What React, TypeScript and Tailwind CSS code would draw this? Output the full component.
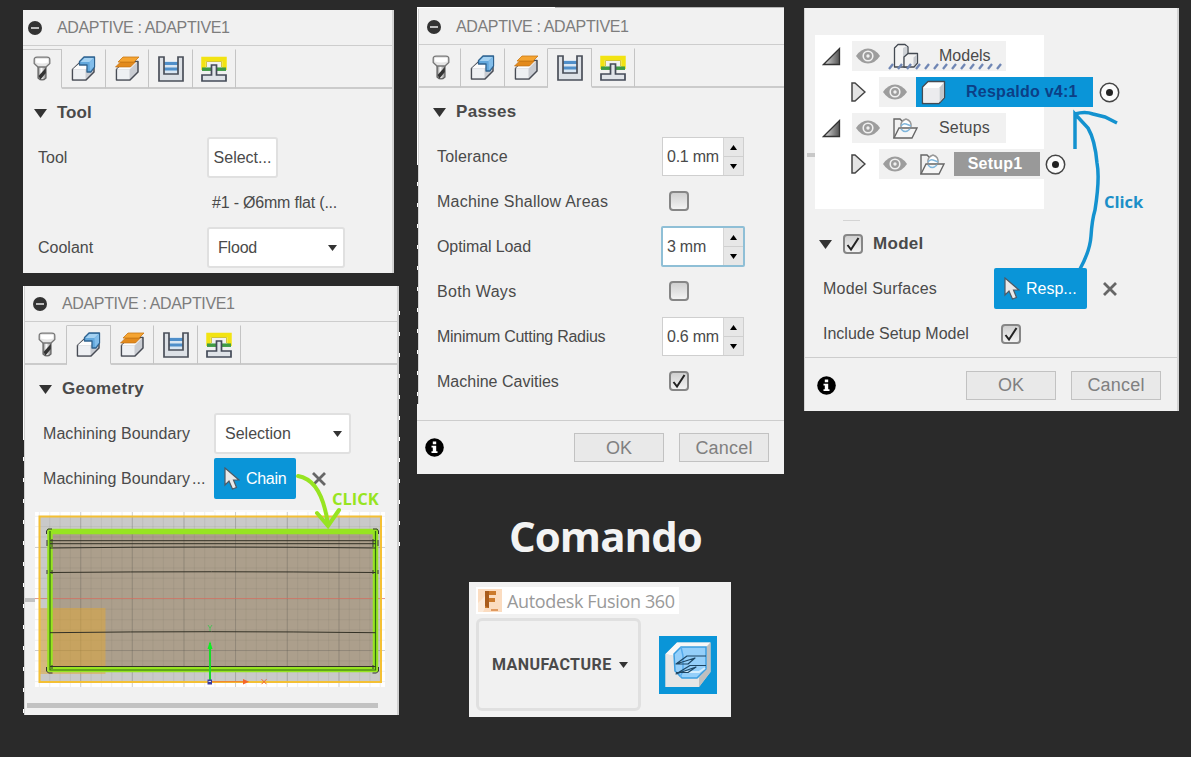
import type { ReactNode } from "react";

const LABEL = "whitespace-pre text-[16px] leading-5 text-[#4a4a4a]";

function ToolIcon() {
  return (
    <svg width="18" height="26" viewBox="0 0 18 26">
      <defs>
        <linearGradient id="bit" x1="0" x2="1">
          <stop offset="0" stopColor="#777" />
          <stop offset="0.4" stopColor="#fff" />
          <stop offset="1" stopColor="#888" />
        </linearGradient>
      </defs>
      <path d="M5 10h8v12q-4 4-8 0z" fill="url(#bit)" stroke="#666" strokeWidth="1.2" />
      <path d="M5.5 20 12.8 12v5L7.5 23.5z" fill="#333" />
      <path d="M1.2 4Q1 1.2 4 1.2h10q3 0 2.800 2.800v3.500L13 11H5L1.200 7.500z" fill="#e6e6e6" stroke="#777" strokeWidth="1.300" />
      <path d="M3 6.500Q9 8.500 15 6.500V3H3z" fill="#fff" />
    </svg>
  );
}

function BlockBase() {
  return (
    <g stroke="#484c55" strokeWidth="1.500" strokeLinejoin="round">
      <path d="M1.500 13.500 10 5.500h13V16l-8 8H1.500z" fill="#c9ccd2" />
      <path d="M1.500 13.500 10 6h12l-7.500 7.500z" fill="#fdfdfd" stroke="none" />
      <path d="M2.300 14h12.200v9.200H2.300z" fill="#eef0f3" stroke="none" />
    </g>
  );
}

function GeometryIcon() {
  return (
    <svg width="25" height="26" viewBox="0 0 25 26">
      <BlockBase />
      <path d="M13 1h10.500v10L20 16h-4V9H8.500V5.500z" fill="#62a8dd" stroke="#2f628e" strokeWidth="1.300" strokeLinejoin="round" />
      <path d="M13.500 2h9l-4 4H9.500z" fill="#a5d2f2" />
      <path d="m18.500 6 4.500-4v8.500L19 15z" fill="#82bdea" />
    </svg>
  );
}

function HeightsIcon() {
  return (
    <svg width="25" height="26" viewBox="0 0 25 26">
      <BlockBase />
      <path d="M5.500 6h15l-5 5h-15z" fill="#e38a1c" stroke="#b96a12" strokeWidth=".6" />
      <path d="M8 1h16l-5 5H3z" fill="#f5a431" stroke="#c97815" strokeWidth=".8" />
    </svg>
  );
}

function PassesIcon() {
  return (
    <svg width="26" height="26" viewBox="0 0 26 26">
      <path d="M5 5h16v13H5z" fill="#d9e6f2" />
      <path d="M6 7.500h14M6 13h14" stroke="#4f8fca" strokeWidth="3" />
      <path d="M1 1h5v17h14V1h5v24H1z" fill="#dde1e6" stroke="#4a4f59" strokeWidth="1.700" />
    </svg>
  );
}

function LinkingIcon() {
  return (
    <svg width="26" height="26" viewBox="0 0 26 26">
      <path d="M2.500 14V3h21v11" fill="none" stroke="#f2e312" strokeWidth="4.500" />
      <path d="M5.500 11V5.500h15V11" fill="none" stroke="#c9b918" strokeWidth=".8" />
      <path d="M1 13.200h24" stroke="#3f9b45" strokeWidth="3.500" />
      <path d="M10.500 9h5v10H25v6H1v-6h9.500z" fill="#dfe3e8" stroke="#444b58" strokeWidth="1.700" />
    </svg>
  );
}

function CheckBox({ checked = false }: { checked?: boolean }) {
  return (
    <span className="flex size-5 shrink-0 items-center justify-center rounded-[4px] border-2 border-[#868686] bg-linear-to-b from-[#d0d0d0] to-[#f3f3f3]">
      {checked && (
        <svg width="16" height="16" viewBox="0 0 16 16" fill="none" stroke="#222" strokeWidth="2">
          <path d="m2.500 9 3.500 4.500L13.500 2" />
        </svg>
      )}
    </span>
  );
}

function Caret({ className }: { className: string }) {
  return (
    <svg className={className} viewBox="0 0 12 8" preserveAspectRatio="none" fill="#333">
      <path d="M0 0h12L6 8z" />
    </svg>
  );
}

function Spinner({ value, focus = false }: { value: string; focus?: boolean }) {
  return (
    <div
      className={
        focus
          ? "flex h-[41px] w-[84px] rounded-[2px] border-2 border-[#8fbfd6] bg-white"
          : "mx-px flex h-[39px] w-[82px] border border-[#cfcfcf] bg-white"
      }
    >
      <span className={`${LABEL} flex flex-1 items-center pl-1 tracking-[-0.250px]`}>{value}</span>
      <div className="flex w-5 flex-col border-l border-[#d5d5d5] bg-[#e7e7e7]">
        <span className="flex flex-1 items-center justify-center border-b border-[#d0d0d0]">
          <svg width="7" height="5" viewBox="0 0 7 5"><path d="M3.500 0 7 5H0z" /></svg>
        </span>
        <span className="flex flex-1 items-center justify-center">
          <svg width="7" height="5" viewBox="0 0 7 5"><path d="M3.500 5 7 0H0z" /></svg>
        </span>
      </div>
    </div>
  );
}

function Footer() {
  const button = "flex h-[29px] w-[90px] items-center justify-center border-[1.500px] border-[#c2c2c2] bg-[#e9e9e9] pt-px text-[18px] text-[#808080]";
  return (
    <div className="flex flex-1 items-center">
      <svg width="19" height="19" viewBox="0 0 19 19">
        <circle cx="9.500" cy="9.500" r="9.300" />
        <path d="M7.800 3.500h3.400v2.800H7.800zM6.500 7.800h4.700v5.400h1.300V15h-6v-1.800h1.300V9.500H6.500z" fill="#fff" />
      </svg>
      <span className={`${button} ml-auto`}>OK</span>
      <span className={`${button} ml-[15px] tracking-[0.200px]`}>Cancel</span>
    </div>
  );
}

function DialogHead({ active, wide = false }: { active: number; wide?: boolean }) {
  const icons: ReactNode[] = [<ToolIcon />, <GeometryIcon />, <HeightsIcon />, <PassesIcon />, <LinkingIcon />];
  const widths = [wide ? "w-[42px] pl-[2px]" : "w-[39px]", "w-[44px]", "w-[43px]", "w-[44px]", "w-[43px]"];
  return (
    <>
      <div className={`flex h-[36px] items-center border-b border-[#cdcdcd] ${wide ? "pl-[8px]" : "pl-[5px]"}`}>
        <span className="flex size-[14px] items-center justify-center rounded-full bg-[#333]">
          <span className="h-[2px] w-[8px] bg-[#bdbdbd]" />
        </span>
        <span className="ml-[15px] whitespace-pre text-[16px] tracking-[-0.350px] text-[#7d7d7d]">ADAPTIVE : ADAPTIVE1</span>
      </div>
      <div className="flex h-[43px] pt-[3px]">
        {icons.map((icon, i) => (
          <div
            key={i}
            className={`${widths[i]} flex items-center justify-center border-r border-r-[#c4c4c4] border-t border-b-2 ${
              i === active ? "border-t-[#c8c8c8] border-b-transparent" : "border-t-transparent border-b-[#cbcbcb]"
            }`}
          >
            {icon}
          </div>
        ))}
        <div className="flex-1 border-b-2 border-[#cbcbcb]" />
      </div>
    </>
  );
}

function Section({ title, className }: { title: string; className: string }) {
  return (
    <div className={`flex h-[46px] items-center pt-[2px] ${className}`}>
      <Caret className="h-[9px] w-[13px]" />
      <span className="ml-[10px] text-[17px] font-bold text-[#4a4a4a]">{title}</span>
    </div>
  );
}

function Cursor() {
  return (
    <svg width="16" height="23" viewBox="0 0 16 23" className="shrink-0">
      <path d="M1 1v17l4-4 3.500 8 4-1.500L9.500 13h5.500z" fill="#e9e9e9" stroke="#4d5a66" strokeWidth="1.200" />
    </svg>
  );
}

function Cross() {
  return (
    <svg width="14" height="14" viewBox="0 0 14 14" stroke="#666" strokeWidth="2.800">
      <path d="m1 1 12 12M13 1 1 13" />
    </svg>
  );
}

function Stock() {
  const minor = Array.from({ length: 34 }, (_, i) => 4.400 + i * 10.330);
  const rows = Array.from({ length: 17 }, (_, i) => 4.300 + i * 10.330);
  const major = [45.700, 97.300, 149, 200.500, 252.300, 304];
  return (
    <svg width="350" height="175" viewBox="0 0 350 175" className="block">
      <rect width="350" height="175" fill="#fff" />
      <rect x="4.500" y="4.500" width="341.500" height="165.500" fill="#c9c9c9" />
      <rect x="15" y="19" width="325" height="139" fill="#ac9f8c" />
      <g stroke="#5c5c50" strokeOpacity=".09">
        {minor.map((x) => <path key={x} d={`M${x} 0V175`} />)}
        {rows.map((y) => <path key={y} d={`M0 ${y}H350`} />)}
      </g>
      <g stroke="#444" strokeOpacity=".2">
        {major.map((x) => <path key={x} d={`M${x} 0V175`} />)}
        <path d="M0 35.500H350M0 138.500H350" />
      </g>
      <path d="M0 86.500H350" stroke="#dc6a5c" strokeOpacity=".65" />
      <rect x="5" y="96" width="65.500" height="66" fill="#e2a834" fillOpacity=".5" />
      <rect x="4.500" y="4.500" width="341.500" height="165.500" fill="none" stroke="#f4c034" strokeWidth="2" />
      <path d="M15 19.500v138h325.500v-138z" fill="none" stroke="#97e421" strokeWidth="5.500" />
      <path d="M15 19v139h325.500V19" fill="none" stroke="#2f6b12" strokeWidth="1.200" />
      <path d="M15 28.700h325.500M15 31.700h325.500M15 36q160-2 325.500 0M15 60.500q160-1.500 325.500 0M15 120.700q160-2 325.500 0M15 154.500h325.500" fill="none" stroke="#333126" strokeWidth="1" />
      <g fill="none" stroke="#333" strokeWidth="1">
        <path d="M17 17h-4l-1.500 2v3M338 17h4l1.500 2v3M12 28v6M343 28v6M12 58v4M343 58v4M11.500 155v4l2 2h4M343.500 155v4l-2 2h-4" />
        <path d="M17 27v8M338 27v8M17 58v4M338 58v4M17 153v4M338 153v4" />
      </g>
      <path d="M175 169V131" stroke="#18dc28" strokeWidth="2" />
      <path d="m175 129-2.500 8h5z" fill="#10ee22" />
      <path d="m173 113 2 3 2-3m-2 3v3" fill="none" stroke="#4fc05a" />
      <path d="M175 169.700h35" stroke="#f08a2c" strokeWidth="1.200" />
      <path d="m208 167 6 2.700-6 2.700z" fill="#f5652a" />
      <path d="m226.500 167.200 5 5m0-5-5 5" stroke="#f0652e" />
      <path d="M172.500 167.500h4.500v5h-4.500z" fill="#3a3a9c" />
      <path d="M173.500 169.500h2.500" stroke="#ddd" />
    </svg>
  );
}

function Eye() {
  return (
    <svg width="24" height="16" viewBox="0 0 24 16" className="shrink-0">
      <path d="M0 8Q5 .5 12 .5T24 8q-5 7.500-12 7.500T0 8z" fill="#9d9d9d" />
      <circle cx="12" cy="8" r="4.800" fill="none" stroke="#f1f1f1" strokeWidth="1.600" />
      <circle cx="12" cy="8" r="1.700" fill="#f1f1f1" />
    </svg>
  );
}

function OpenArrow() {
  return (
    <svg width="19" height="19" viewBox="0 0 19 19" className="shrink-0">
      <defs>
        <linearGradient id="tri">
          <stop offset=".2" stopColor="#c5c5c5" />
          <stop offset="1" stopColor="#555" />
        </linearGradient>
      </defs>
      <path d="M17.500 1.500v16H1.500z" fill="url(#tri)" stroke="#333" strokeWidth="1.300" />
    </svg>
  );
}

function ClosedArrow() {
  return (
    <svg width="15" height="20" viewBox="0 0 15 20" className="shrink-0">
      <path d="M1 1h3l10 9-10 9H1z" fill="#e4e4e4" stroke="#444" strokeWidth="1.500" />
    </svg>
  );
}

function Folder() {
  return (
    <svg width="25" height="21" viewBox="0 0 25 21" fill="none" stroke="#666" strokeWidth="1.400" className="shrink-0">
      <path d="M8 9q-1-6 5-8 6 2 5 8" stroke="#999" fill="#fff" />
      <path d="M8 8q2-3 5-2t5 2" stroke="#7fb6dc" />
      <path d="M1 20V1h6l2 2" />
      <path d="M1 20 6 10h18l-5 10z" fill="#f6f6f6" />
      <path d="M8 11q4 5 9 0" stroke="#7fb6dc" />
    </svg>
  );
}

function Radio() {
  return (
    <svg width="21" height="21" viewBox="0 0 21 21" className="shrink-0">
      <circle cx="10.500" cy="10.500" r="9.200" fill="#fbfbfb" stroke="#444" strokeWidth="1.500" />
      <circle cx="10.500" cy="10.500" r="3.500" fill="#222" />
    </svg>
  );
}

function ModelsIcon() {
  return (
    <svg width="26" height="26" viewBox="0 0 26 26" stroke="#444a52" strokeWidth="1.300" strokeLinejoin="round">
      <path d="M1.500 5 5 1.500h7L15 4v20H1.500z" fill="#f4f4f4" />
      <path d="M10 5 14 3v20h-4z" fill="#cfd2d6" stroke="none" />
      <path d="m11 14 4-3.500h9.500V20L21 24H11z" fill="#f2f2f2" />
      <path d="M20.500 14.500 24 11.500v8L20.500 23z" fill="#c5c8cd" stroke="none" />
    </svg>
  );
}

function CubeIcon() {
  return (
    <svg width="25" height="25" viewBox="0 0 25 25" strokeLinejoin="round">
      <path d="M1.500 7 7 1.500h16.500v16L18 23.500H1.500z" fill="#fdfdfd" stroke="#444a52" strokeWidth="1.400" />
      <path d="m18.500 7.500 4.500-5v15l-4.500 5z" fill="#c4c8cc" />
      <path d="M2.500 8h15.500v14.500H2.500z" fill="#ececee" />
    </svg>
  );
}

function AdaptiveIcon() {
  return (
    <svg width="58" height="58" viewBox="0 0 58 58">
      <rect width="58" height="58" fill="#0a95d8" />
      <path d="M6.500 18 18 6.500h33.500V36L40 51H6.500z" fill="#d4d4d4" />
      <path d="M6.500 18 18 6.500h33.500L47 11H22l-7 9z" fill="#f8f8f8" />
      <path d="M6.500 18 15 20v15l8 7h17v9H6.500z" fill="#e6e6e6" />
      <path d="m51.500 6.500-4 4.500v22L40 42v9l11.500-15z" fill="#bfbfbf" />
      <path d="m15 18 7-7h25v22l-9 9H23l-7-7z" fill="#94cffa" stroke="#3c9ee0" strokeWidth="1.500" />
      <path d="m22 11 2 9M24 20v15l-3 6" fill="none" stroke="#58acec" strokeWidth="1.500" />
      <path d="M24 36h16l6-4" fill="none" stroke="#d4eefe" strokeWidth="2" />
      <path d="M47 20H28l-11 8 19-6-7 6H17M47 29.500H31L17 38l20-7-8 5.500H17" fill="none" stroke="#1d4664" strokeWidth="1.200" strokeLinejoin="round" />
    </svg>
  );
}

function FusionLogo() {
  return (
    <svg width="24" height="24" viewBox="0 0 24 24">
      <rect width="24" height="23" fill="#fbdcc0" />
      <path d="M0 14 9 5v10l-4 8H0z" fill="#fff" fillOpacity=".4" />
      <path d="M7 2h11v4h-7v3h6v4h-6v6H7z" fill="#cb7a2c" />
      <path d="M7 2h4v17l-4-2z" fill="#a95c1c" />
      <path d="M13 21h7" stroke="#e09a60" strokeWidth="2" />
    </svg>
  );
}

export default function App() {
  return (
    <main
      className="relative flex h-[757px] w-[1191px] items-start overflow-hidden bg-[#2a2a2a] pl-[23px]"
      style={{ fontFamily: '"Liberation Sans", Arial, sans-serif' }}
    >
      <div className="flex w-[394px] flex-col pt-[10px]">
        <section className="h-[263px] w-[371px] border-r-2 border-[#d3d3d3] bg-[#f1f1f1]">
          <DialogHead active={0} />
          <Section title="Tool" className="pl-[11px]" />
          <div className="flex h-[45px] items-center pl-[15px]">
            <span className={`${LABEL} w-[169px]`}>Tool</span>
            <span className={`${LABEL} flex h-[41px] w-[71px] items-center justify-center rounded-[3px] border-2 border-[#e0e0e0] bg-white`}>
              Select...
            </span>
          </div>
          <div className={`${LABEL} flex h-[45px] items-center pl-[189px] tracking-[-0.200px]`}>#1 - Ø6mm flat (...</div>
          <div className="flex h-[45px] items-center pl-[15px]">
            <span className={`${LABEL} w-[169px]`}>Coolant</span>
            <span className={`${LABEL} flex h-[41px] w-[138px] items-center justify-between rounded-[3px] border-2 border-[#e0e0e0] bg-white pl-[9px] pr-[6px] tracking-[-0.200px]`}>
              Flood
              <Caret className="h-[6px] w-[9px]" />
            </span>
          </div>
        </section>

        <section className="relative mt-[13px] flex h-[429px] w-[376px] bg-[#f1f1f1]">
          <div className="w-px bg-white pt-[154px]">
            <div className="h-full bg-[repeating-linear-gradient(#2a2a2a_0_17px,#fff_17px_21px)]" />
          </div>
          <div className="w-[375px] border-r-2 border-l border-[#d0d0d0]">
            <DialogHead active={1} wide />
            <Section title="Geometry" className="pl-[14px] tracking-[0.350px]" />
            <div className="flex h-[45px] items-center pl-[18px]">
              <span className={`${LABEL} w-[171px] tracking-[0.060px]`}>Machining Boundary</span>
              <span className={`${LABEL} flex h-[41px] w-[137px] items-center justify-between rounded-[3px] border-2 border-[#e0e0e0] bg-white pl-[9px] pr-[7px]`}>
                Selection
                <Caret className="h-[6px] w-[9px]" />
              </span>
            </div>
            <div className="flex h-[45px] items-center pl-[18px]">
              <span className={`${LABEL} w-[171px] tracking-[0.060px]`}>
                Machining Boundary<span className="ml-[2px]">...</span>
              </span>
              <span className="flex h-[41px] w-[82px] items-center rounded-[2px] bg-[#0a95d8] pl-[10px] text-[16px] text-white">
                <Cursor />
                <span className="ml-[6px] tracking-[-0.300px]">Chain</span>
              </span>
              <span className="ml-[16px]"><Cross /></span>
            </div>
            <div className="ml-[189px] mt-[9px] h-[2px] w-[138px] bg-[#fafafa]" />
            <div className="flex items-center">
              <div className="h-[4px] w-[10px] bg-[#c2c2c2]" />
              <Stock />
            </div>
            <div className="ml-[2px] mt-[16px] h-[5px] w-[351px] bg-[#c2c2c2]" />
          </div>
          <div className="absolute top-[25px] left-[376px] h-[245px] w-px bg-[repeating-linear-gradient(#fff_0_4px,transparent_4px_21px)]" />
          <svg className="absolute left-[270px] top-[180px]" width="60" height="70" viewBox="0 0 60 70" fill="none" stroke="#97e421" strokeWidth="4" strokeLinecap="round">
            <path d="M5 10Q29 14 35 59" />
            <path d="m24 47 11 13 11-16" />
          </svg>
          <span className="absolute left-[309px] top-[202px] text-[16.500px] leading-[22px] font-bold text-[#97e421]" style={{ fontFamily: '"Open Sans", sans-serif' }}>
            CLICK
          </span>
        </section>
      </div>

      <div className="flex w-[387px] flex-col pt-[7px]">
        <section className="flex h-[467px] w-[367px] flex-col bg-[#f1f1f1]">
          <div className="flex h-[2px]">
            <div className="h-px w-[138px] bg-white" />
            <div className="h-px flex-1 bg-[#b5b5b5]" />
          </div>
          <div className="flex">
            <div className="w-px bg-white pt-[156px]">
              <div className="h-full bg-[repeating-linear-gradient(#2a2a2a_0_17px,#fff_17px_21px)]" />
            </div>
            <div className="flex-1 border-l border-[#d0d0d0]">
              <DialogHead active={3} wide />
              <Section title="Passes" className="pl-[14px] tracking-[0.300px]" />
              {[
                { name: "Tolerance", track: "tracking-[0.150px]", control: <Spinner value="0.1 mm" /> },
                { name: "Machine Shallow Areas", track: "tracking-[0.230px]", control: <CheckBox /> },
                { name: "Optimal Load", track: "tracking-[-0.100px]", control: <Spinner value="3 mm" focus /> },
                { name: "Both Ways", track: "tracking-[0.300px]", control: <CheckBox /> },
                { name: "Minimum Cutting Radius", track: "tracking-[-0.270px]", control: <Spinner value="0.6 mm" /> },
                { name: "Machine Cavities", track: "", control: <CheckBox checked /> },
              ].map((row) => (
                <div key={row.name} className="flex h-[45px] items-center pl-[18px]">
                  <span className={`${LABEL} ${row.track} w-[224px]`}>{row.name}</span>
                  {row.control.type === CheckBox ? <span className="mb-px pl-[8px]">{row.control}</span> : row.control}
                </div>
              ))}
            </div>
          </div>
          <div className="mt-[16px] border-t border-[#cdcdcd]" />
          <div className="flex flex-1 pl-[8px] pr-[15px]">
            <Footer />
          </div>
        </section>

        <h1 className="ml-[92px] mt-[34px] text-[42px] leading-[56px] font-bold tracking-[-0.950px] text-[#f3f3f3]" style={{ fontFamily: '"Open Sans", sans-serif' }}>
          Comando
        </h1>

        <section className="ml-[52px] mt-[18px] h-[135px] w-[262px] bg-[#f1f1f1] pl-[7px] pt-[5px]">
          <div className="flex h-[27px] w-[203px] items-center bg-white pl-[2px]">
            <FusionLogo />
            <span className="ml-[5px] whitespace-pre text-[18px] leading-6 tracking-[-0.350px] text-[#999]" style={{ fontFamily: '"Open Sans", sans-serif' }}>
              Autodesk Fusion 360
            </span>
          </div>
          <div className="mt-[4px] flex items-center">
            <div className="flex h-[93px] w-[165px] items-center rounded-[6px] border-[3px] border-[#e0e0e0] pl-[13px]">
              <span className="text-[16px] font-bold tracking-[0.450px] text-[#4a4a4a]" style={{ fontFamily: "Roboto, sans-serif" }}>
                MANUFACTURE
              </span>
              <Caret className="ml-[7px] h-[6px] w-[9px]" />
            </div>
            <span className="ml-[18px] pt-px"><AdaptiveIcon /></span>
          </div>
        </section>
      </div>

      <section className="relative mt-[8px] h-[403px] w-[375px] border-l border-r-2 border-[#d3d3d3] bg-[#f1f1f1]">
        <div className="flex items-center pl-[2px] pt-[27px]">
          <div className="mt-[65px] h-[4px] w-[8px] bg-[#c8c8c8]" />
          <div className="flex h-[174px] w-[229px] flex-col gap-[6px] bg-white pl-[7px] pt-[6px]">
            <div className="relative flex h-[30px] shrink-0 items-center">
              <OpenArrow />
              <div className="ml-[11px] flex h-[30px] w-[154px] items-center bg-[#f1f1f1] pl-[4px]">
                <Eye />
                <span className="ml-[13px]"><ModelsIcon /></span>
                <span className={`${LABEL} ml-[20px]`}>Models</span>
              </div>
              <svg className="absolute left-[66px] top-[21px]" width="116" height="8" viewBox="0 0 116 8" stroke="#6f86b4" strokeWidth="2.300">
                {Array.from({ length: 13 }, (_, i) => (
                  <path key={i} d={`M${1 + i * 9} 7l4-5`} />
                ))}
              </svg>
            </div>
            <div className="flex h-[30px] shrink-0 items-center pl-[29px]">
              <ClosedArrow />
              <div className="ml-[13px] flex h-[30px] w-[37px] shrink-0 items-center bg-[#f1f1f1] pl-[4px]"><Eye /></div>
              <div className="flex h-[30px] w-[177px] shrink-0 items-center bg-[#0a95d8] pl-[5px]">
                <CubeIcon />
                <span className="ml-[20px] whitespace-pre text-[16px] font-bold tracking-[0.250px] text-[#0c3f86]">Respaldo v4:1</span>
              </div>
              <span className="ml-[6px]"><Radio /></span>
            </div>
            <div className="flex h-[30px] shrink-0 items-center">
              <OpenArrow />
              <div className="ml-[11px] flex h-[30px] w-[154px] items-center bg-[#f1f1f1] pl-[4px]">
                <Eye />
                <span className="ml-[13px]"><Folder /></span>
                <span className={`${LABEL} ml-[21px] tracking-[0.200px]`}>Setups</span>
              </div>
            </div>
            <div className="flex h-[30px] shrink-0 items-center pl-[29px]">
              <ClosedArrow />
              <div className="ml-[13px] flex h-[30px] w-[166px] shrink-0 items-center bg-[#f1f1f1] pl-[4px]">
                <Eye />
                <span className="ml-[13px]"><Folder /></span>
                <span className="ml-[9px] flex h-6 w-[86px] shrink-0 items-center justify-center bg-[#999] pr-[4px] text-[16px] font-bold tracking-[0.200px] text-white">Setup1</span>
              </div>
              <span><Radio /></span>
            </div>
          </div>
        </div>
        <div className="ml-[38px] mt-[11px] h-px w-[17px] bg-[#d4d4d4]" />
        <div className="mt-[1px] flex h-[44px] items-center pl-[14px]">
          <Caret className="h-[9px] w-[13px]" />
          <span className="ml-[11px] pb-px"><CheckBox checked /></span>
          <span className="ml-[10px] text-[17px] font-bold tracking-[0.300px] text-[#4a4a4a]">Model</span>
        </div>
        <div className="flex h-[45px] items-center pl-[18px]">
          <span className={`${LABEL} w-[171px] tracking-[0.200px]`}>Model Surfaces</span>
          <span className="flex h-[41px] w-[93px] items-center rounded-[2px] bg-[#0a95d8] pl-[10px] text-[16px] text-white">
            <Cursor />
            <span className="ml-[6px]">Resp...</span>
          </span>
          <span className="ml-[16px]"><Cross /></span>
        </div>
        <div className="flex h-[45px] items-center pl-[18px]">
          <span className={`${LABEL} w-[178px]`}>Include Setup Model</span>
          <CheckBox checked />
        </div>
        <div className="mt-[1px] border-t border-[#cdcdcd]" />
        <div className="flex h-[54px] pl-[12px] pr-[16px]">
          <Footer />
        </div>
        <svg className="absolute left-[265px] top-[100px]" width="52" height="166" viewBox="0 0 52 166" fill="none" stroke="#1492cf" strokeWidth="3.500">
          <path d="M9.500 162Q20 143 21 128 22 112 25 102 30 70 27 55 25 32 18 20L5 6v35M5 6q10-3 18 0l12 3 12 6" />
        </svg>
        <span className="absolute left-[299px] top-[183px] text-[16.500px] leading-[22px] font-bold text-[#1b8fc8]" style={{ fontFamily: '"Open Sans", sans-serif' }}>
          Click
        </span>
      </section>
    </main>
  );
}
